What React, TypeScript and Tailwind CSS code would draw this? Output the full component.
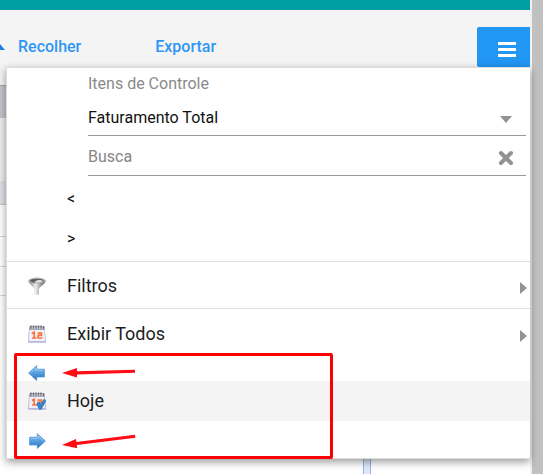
import React from 'react';

const CalendarIcon = ({ checked = false }: { checked?: boolean }) => (
  <svg viewBox="0 0 18 18" className="h-[18px] w-[18px]" aria-hidden="true">
    <path d="M1 2.500h15.500l1.500 14a1 1 0 0 1-1 1.200H1a1 1 0 0 1-1-1z" fill="#b3b8dc" />
    <path d="M1.500 5h14.800l.7 11H1z" fill="#f3eff9" />
    <path d="M1.500 1.300h15v3.400H1.500z" fill="#92939f" />
    <path d="M3 .5v2M5.500 .5v2M8 .5v2M10.500 .5v2M13 .5v2M15.500 1.500v2" stroke="#5b5c66" strokeWidth="1.200" />
    <path d="M4.200 2v2.500M6.700 2v2.500M9.200 2v2.500M11.700 2v2.500M14.200 2v2.500" stroke="#d4d4dc" strokeWidth="1" />
    <path
      d="M3.800 8.400 6.200 7.200v6M4 13h4.500M9.600 8.100h3.900v2.300h-3.400V13h4.300"
      fill="none"
      stroke="#f8743a"
      strokeWidth="1.700"
    />
    {checked && (
      <path d="m8.500 12 2.600-2 1.600 2.300L16.200 7l1.800 1.700-4.800 8.500-1.700.3z" fill="#3a84cc" stroke="#2465a8" strokeWidth=".6" />
    )}
  </svg>
);

const FunnelIcon = () => (
  <svg viewBox="0 0 18 18" className="h-[18px] w-[18px]" aria-hidden="true">
    <defs>
      <linearGradient id="funnel" x1="0" x2="1" y1="0" y2="0">
        <stop offset="0" stopColor="#777" />
        <stop offset=".42" stopColor="#eee" />
        <stop offset="1" stopColor="#484848" />
      </linearGradient>
    </defs>
    <path d="M.3 3.500c0 3 5.200 6 6.200 8.500v5.200c.9 1 3.600 1 4.500 0V12c1-2.500 6.700-5.500 6.700-8.500z" fill="url(#funnel)" />
    <ellipse cx="9" cy="3.600" rx="8.600" ry="3" fill="#b5b5b5" />
    <ellipse cx="9" cy="3.800" rx="7" ry="2.100" fill="#5f5f5f" />
    <path d="M6.500 5.500c1-2.400 5.500-3.200 8.500-1.500-1.500 1.500-5.500 2.200-8.500 1.500z" fill="#e6e6e6" />
  </svg>
);

const BlueArrow = ({ flip = false }: { flip?: boolean }) => (
  <svg viewBox="0 0 18 16" className={flip ? 'h-4 w-[18px] -scale-x-100' : 'h-4 w-[18px]'} aria-hidden="true">
    <defs>
      <linearGradient id="blueArrow" x1="0" x2="0" y1="0" y2="1">
        <stop offset="0" stopColor="#8cc4f2" />
        <stop offset=".5" stopColor="#559fe0" />
        <stop offset="1" stopColor="#2a6cba" />
      </linearGradient>
    </defs>
    <path d="M.6 8 8.700.6v3.600h7.700v7.800H8.700v3.500z" fill="url(#blueArrow)" stroke="#4a8bd0" strokeWidth=".7" />
    <path d="M2.600 7.600 7.800 2.800v2.500h7.600" fill="none" stroke="#9bcdf5" strokeWidth=".8" />
  </svg>
);

const SubmenuCaret = () => (
  <svg viewBox="0 0 7 12" className="mt-1 ml-auto h-3 w-[7px]" aria-hidden="true">
    <path d="M0 0v12l7-6z" fill="#929292" />
  </svg>
);

const Annotation = () => (
  <div className="pointer-events-none absolute -top-1 -bottom-px left-[7px] w-[319px] rounded-xs border-3 border-[#ff0000]">
    <svg viewBox="0 0 90 100" className="absolute -top-px left-10 h-[100px] w-[90px]" fill="#ff0c14" aria-hidden="true">
      <path d="m5 18 15-5v3.300l58-1.500v3L20 19.400V22.500z" />
      <path d="m5 90 14-6 .4 3L78 79.800l.4 3-58.500 7.200.3 3.200z" />
    </svg>
  </div>
);

const OptionsMenu = () => (
  <div className="absolute top-[67px] right-0 left-[6px] border-y border-l border-[#dcdcdc] bg-white shadow-[0_3px_8px_rgba(0,0,0,0.4)]">
    <div className="pt-1 pr-1 pl-[81px] text-base">
      <label htmlFor="control-item" className="block h-6 leading-6 text-[#8a8a8a]">
        Itens de Controle
      </label>
      <div className="relative">
        <select
          id="control-item"
          className="block h-10 w-full appearance-none border-b border-[#999] bg-transparent pt-1 text-[#111] outline-none"
        >
          <option>Faturamento Total</option>
        </select>
        <svg viewBox="0 0 12 7" className="pointer-events-none absolute top-5 right-[14px] h-[7px] w-3" aria-hidden="true">
          <path d="M0 0h12L6 7z" fill="#929292" />
        </svg>
      </div>
      <div className="flex h-10 items-center border-b border-[#999] pr-3">
        <input
          type="text"
          aria-label="Busca"
          placeholder="Busca"
          className="min-w-0 flex-1 bg-transparent pt-0.5 outline-none placeholder:text-[#858585]"
        />
        <button type="button" aria-label="Limpar busca">
          <svg viewBox="0 0 16 16" className="mt-1 h-4 w-4" aria-hidden="true">
            <path d="m3 3 10 10M13 3 3 13" stroke="#929292" strokeWidth="4" strokeLinecap="round" />
          </svg>
        </button>
      </div>
    </div>

    <div className="pt-[3px] pb-[2px] text-base text-[#111]">
      <button type="button" className="block h-10 w-full pl-[60px] text-left">&lt;</button>
      <button type="button" className="block h-10 w-full pl-[60px] text-left">&gt;</button>
    </div>

    <div className="text-lg text-[#1c1c1c]">
      <button type="button" className="flex h-12 w-full items-center gap-[21px] border-y border-[#dedede] pt-0.5 pr-[3px] pl-[21px]">
        <FunnelIcon />
        Filtros
        <SubmenuCaret />
      </button>
      <button type="button" className="flex h-12 w-full items-center gap-[21px] pt-0.5 pr-[3px] pl-[21px]">
        <CalendarIcon />
        Exibir Todos
        <SubmenuCaret />
      </button>
      <div className="relative">
        <button type="button" aria-label="Anterior" className="flex h-6 w-full items-end pl-[21px]">
          <BlueArrow />
        </button>
        <button type="button" className="flex h-10 w-full items-center gap-[21px] bg-[#f4f4f4] pl-[21px]">
          <CalendarIcon checked />
          Hoje
        </button>
        <button type="button" aria-label="Próximo" className="flex h-[37px] w-full items-center pt-0.5 pl-[21px]">
          <BlueArrow flip />
        </button>
        <Annotation />
      </div>
    </div>
  </div>
);

const PageBehind = () => (
  <div>
    <div className="h-[33px] border-t border-[#a5a8ab] bg-[#c2c5ca]" />
    <div className="h-[63px] bg-[#eceeed]" />
    <div className="h-6 border-b border-[#c6c7ce] bg-[#dfe0e5]" />
    <div className="h-8 border-b border-[#d8d8d8]" />
    <div className="h-[30px] border-b border-[#d8d8d8]" />
    <div className="h-[29px] border-b border-[#d8d8d8]" />
    <div className="flex h-[178px] justify-end pr-[159px]">
      <div className="w-2 border-x border-[#94b4e6] bg-[#dfe8f8]" />
    </div>
  </div>
);

const App = () => {
  return (
    <div className="flex overflow-hidden bg-white font-['Roboto',sans-serif]">
      <main className="relative min-w-0 flex-1">
        <div className="h-[10px] bg-[#009da5]" />
        <header className="flex h-[75px] items-start bg-[#f4f4f4] pt-[17px] text-base font-medium text-[#2f96f3]">
          <svg viewBox="0 0 5 8" className="mt-4 h-2 w-[5px]" aria-hidden="true">
            <path d="M0 1v6h5z" fill="#1f7fdc" />
          </svg>
          <button type="button" className="ml-[13px] h-10">Recolher</button>
          <button type="button" className="ml-[74px] h-10">Exportar</button>
          <button
            type="button"
            aria-label="Menu"
            className="ml-auto flex h-10 w-[53px] flex-col items-center justify-center gap-[3px] rounded-l-xs bg-[#2196f3] pt-1 pl-1.5"
          >
            <span className="h-[3px] w-[18px] bg-white" />
            <span className="h-[3px] w-[18px] bg-white" />
            <span className="h-[3px] w-[18px] bg-white" />
          </button>
        </header>
        <PageBehind />
        <OptionsMenu />
      </main>
      <div className="w-[13px] border-l-2 border-[#f1f1f1] bg-[#c1c1c1]" />
    </div>
  );
};

export default App;
